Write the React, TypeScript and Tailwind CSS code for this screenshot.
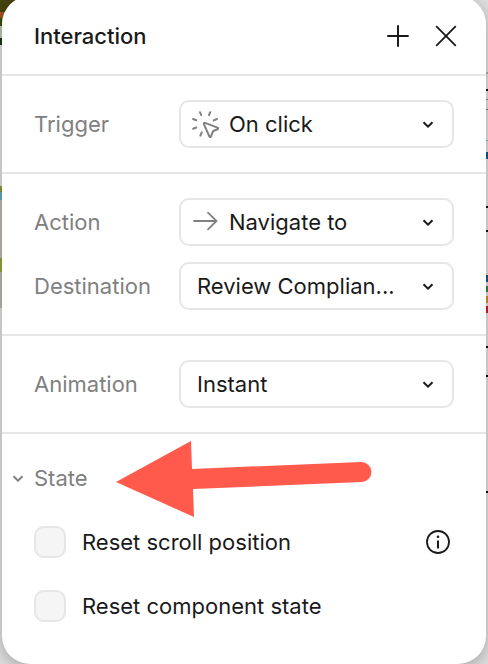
import React, { useState } from 'react';

type Band = { y: number; h: number; fill: string };

const leftBands: Band[] = [
  { y: 0, h: 12, fill: '#47430f' },
  { y: 12, h: 6, fill: '#a0521c' },
  { y: 18, h: 8, fill: '#3a4f10' },
  { y: 26, h: 12, fill: '#b9c6b4' },
  { y: 38, h: 7, fill: '#173c0c' },
  { y: 186, h: 6, fill: '#8a9a3c' },
  { y: 192, h: 8, fill: '#6aa5bf' },
  { y: 200, h: 58, fill: '#bdb6a8' },
  { y: 258, h: 14, fill: '#97a23c' },
  { y: 272, h: 36, fill: '#bab4a8' },
];

const rightBands: Band[] = [
  { y: 72, h: 2, fill: '#a8a8a8' },
  { y: 89, h: 2, fill: '#111111' },
  { y: 99, h: 1, fill: '#8c8c8c' },
  { y: 109, h: 1, fill: '#777777' },
  { y: 140, h: 1, fill: '#8fb4cc' },
  { y: 152, h: 7, fill: '#0b5c96' },
  { y: 206, h: 2, fill: '#111111' },
  { y: 230, h: 2, fill: '#111111' },
  { y: 275, h: 7, fill: '#0b5c96' },
  { y: 286, h: 6, fill: '#2b8a43' },
  { y: 296, h: 7, fill: '#cf8d2c' },
  { y: 306, h: 7, fill: '#c4202f' },
  { y: 346, h: 2, fill: '#111111' },
  { y: 375, h: 2, fill: '#111111' },
  { y: 491, h: 2, fill: '#111111' },
];

const Bands: React.FC<{ bands: Band[]; className: string }> = ({ bands, className }) => (
  <svg className={className} aria-hidden="true">
    {bands.map((b) => (
      <rect key={b.y} x="0" y={b.y} width="100%" height={b.h} fill={b.fill} />
    ))}
  </svg>
);

const Chevron: React.FC<{ className?: string }> = ({ className }) => (
  <svg viewBox="0 0 12 12" fill="none" stroke="currentColor" strokeWidth="2" className={className} aria-hidden="true">
    <path d="M1.5 4.2 6 8.6l4.5-4.4" />
  </svg>
);

const ClickIcon = () => (
  <svg viewBox="0 0 28 28" className="w-7 h-7" fill="none" stroke="currentColor" strokeWidth="2" strokeLinecap="round" strokeLinejoin="round" aria-hidden="true">
    <path d="M9 2.2l1.1 2.8M19.2 2.2l-1.2 2.9M26 9l-3.3 1.4M2.1 9l3.2 1.2M2.1 18.7l3.2-1.2M10.8 22.4l-1.5 3.3" />
    <path d="M12.9 14.1c-.3-.8.4-1.5 1.2-1.2l12.4 4.7c.9.3.9 1.2.1 1.6l-3.9 1.6c-.4.2-.7.4-.9.9l-1.8 4.8c-.3.8-1.3.8-1.6 0z" />
  </svg>
);

const ArrowIcon = () => (
  <svg viewBox="0 0 28 28" className="w-7 h-7" fill="none" stroke="currentColor" strokeWidth="1.8" strokeLinecap="round" aria-hidden="true">
    <path d="M3 13h22.5M17 4.7l8.5 8.3-8.5 8.3" />
  </svg>
);

interface FieldProps {
  id: string;
  label: string;
  value: string;
  icon?: React.ReactNode;
}

const Field: React.FC<FieldProps> = ({ id, label, value, icon }) => (
  <div className="grid grid-cols-[145px_1fr] items-center">
    <label htmlFor={id} className="text-[#808080]">
      {label}
    </label>
    <div className="relative min-w-0">
      <select
        id={id}
        className={`w-full h-12 pr-10 appearance-none rounded-[10px] border-2 border-[#e6e6e6] bg-white ${icon ? 'pl-12' : 'pl-4'}`}
      >
        <option>{value}</option>
      </select>
      {icon && (
        <span className="pointer-events-none absolute left-3 top-[10px] text-[#808080]">{icon}</span>
      )}
      <Chevron className="pointer-events-none absolute right-5 top-[18px] w-3 h-3" />
    </div>
  </div>
);

interface CheckProps {
  id: string;
  label: string;
}

const Check: React.FC<CheckProps> = ({ id, label }) => {
  const [checked, setChecked] = useState(false);

  return (
    <div className="flex items-center gap-4">
      <input
        id={id}
        type="checkbox"
        checked={checked}
        onChange={(e) => setChecked(e.target.checked)}
        className="w-8 h-8 appearance-none rounded-[10px] border-2 border-[#e6e6e6] bg-[#f5f5f5] checked:bg-[#0d99ff]"
      />
      <label htmlFor={id}>{label}</label>
    </div>
  );
};

export default function App() {
  return (
    <div className="relative min-h-screen overflow-hidden bg-[#dedede] px-[2px] font-['Inter',sans-serif] [font-optical-sizing:none] text-[22px] leading-8 text-[#1a1a1a]">
      {/* Canvas behind the panel */}
      <Bands bands={leftBands} className="absolute left-0 top-0 w-4 h-full" />
      <Bands bands={rightBands} className="absolute right-0 top-0 w-[2px] h-full" />

      <main className="relative -mt-1 pt-1 rounded-[28px] bg-white shadow-[0_4px_16px_rgba(0,0,0,0.25)]">
        {/* Header */}
        <header className="flex items-center justify-between border-b-2 border-[#e6e6e6] pl-8 pr-7 pt-5 pb-[22px]">
          <h1 className="font-medium">Interaction</h1>
          <div className="flex gap-6">
            <button type="button" aria-label="Add action">
              <svg viewBox="0 0 24 24" className="w-6 h-6" fill="none" stroke="currentColor" strokeWidth="2">
                <path d="M12 1.3v21.4M1.3 12h21.4" />
              </svg>
            </button>
            <button type="button" aria-label="Close">
              <svg viewBox="0 0 24 24" className="w-6 h-6" fill="none" stroke="currentColor" strokeWidth="1.8">
                <path d="M2.2 2.2l19.6 19.6M21.8 2.2 2.2 21.8" />
              </svg>
            </button>
          </div>
        </header>

        <section className="border-b-2 border-[#e6e6e6] px-8 py-6">
          <Field id="trigger" label="Trigger" value="On click" icon={<ClickIcon />} />
        </section>

        <section className="flex flex-col gap-4 border-b-2 border-[#e6e6e6] px-8 py-6">
          <Field id="action" label="Action" value="Navigate to" icon={<ArrowIcon />} />
          <Field id="destination" label="Destination" value="Review Complian..." />
        </section>

        <section className="border-b-2 border-[#e6e6e6] px-8 py-6">
          <Field id="animation" label="Animation" value="Instant" />
        </section>

        {/* State */}
        <section className="relative px-8 pt-7 pb-[42px]">
          <button type="button" className="-ml-[22px] flex items-center gap-[10px] text-[#808080]">
            <Chevron className="w-3 h-3" />
            State
          </button>
          <div className="mt-8 flex flex-col gap-8">
            <div className="flex items-center justify-between">
              <Check id="reset-scroll" label="Reset scroll position" />
              <button type="button" aria-label="About reset scroll position" className="mr-1">
                <svg viewBox="0 0 24 24" className="w-6 h-6" fill="none" stroke="currentColor" strokeWidth="1.8">
                  <circle cx="12" cy="12" r="11" />
                  <path d="M12 10.5v8" strokeWidth="2" />
                  <circle cx="12" cy="6.8" r="1.3" fill="currentColor" stroke="none" />
                </svg>
              </button>
            </div>
            <Check id="reset-component" label="Reset component state" />
          </div>

          {/* Callout arrow */}
          <svg viewBox="0 0 256 76" className="pointer-events-none absolute left-[114px] top-[7px] w-64" fill="#ff5a4c" aria-hidden="true">
            <path d="M0 41 75 0l1 28 169-7a10 10 0 0 1 .8 20L77 48l1 28z" />
          </svg>
        </section>
      </main>
    </div>
  );
}
